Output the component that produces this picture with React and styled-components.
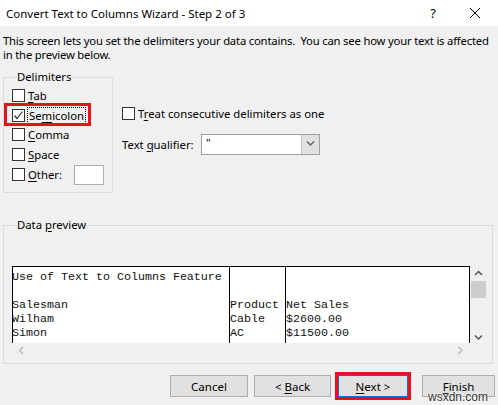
import React from 'react'
import styled, { createGlobalStyle } from 'styled-components'

const GlobalStyle = createGlobalStyle`
  html, body {
    margin: 0;
    padding: 0;
    background: #f0f0f0;
  }
  body {
    font-family: 'Noto Sans', 'Liberation Sans', sans-serif;
    font-size: 11.3px;
    color: #000;
  }
`

const Window = styled.div`
  position: relative;
  width: 498px;
  height: 405px;
  overflow: hidden;
  background: #f0f0f0;
  display: flex;
  flex-direction: column;
`

const TitleBar = styled.div`
  height: 26px;
  flex: none;
  background: #fff;
  display: flex;
  align-items: center;
  padding-left: 6px;
  font-size: 11.5px;
`

const Title = styled.span`
  flex: 1;
`

const TitleButton = styled.span`
  width: 46px;
  height: 26px;
  display: flex;
  align-items: center;
  justify-content: center;
  font-size: 13px;
`

const HelpButton = styled(TitleButton)`
  padding-left: 8px;
  box-sizing: border-box;
`

const Body = styled.div`
  padding: 8px 3px 0 3px;
  display: flex;
  flex-direction: column;
`

const Description = styled.p`
  margin: 0;
  line-height: 14px;
  white-space: nowrap;
  letter-spacing: -0.2px;
`

const TopRow = styled.div`
  display: flex;
  margin-top: 7px;
`

const Group = styled.fieldset`
  margin: 0;
  border: 1px solid #dcdcdc;
  padding: ${(p) => p.$pad || '0'};
  width: ${(p) => p.$width};
  height: ${(p) => p.$height};
  box-sizing: border-box;
`

const Legend = styled.legend`
  padding: 0;
  margin-left: 5px;
  line-height: 16px;
`

const U = styled.span`
  text-decoration: underline;
  text-underline-offset: 2px;
`

const CheckRow = styled.label`
  position: relative;
  display: flex;
  align-items: center;
  gap: 3px;
  height: ${(p) => p.$h || '19.5px'};
`

const Box = styled.span`
  width: 13px;
  height: 13px;
  box-sizing: border-box;
  border: 1px solid #333;
  background: #fff;
  flex: none;
  display: flex;
  align-items: center;
  justify-content: center;
`

const Focused = styled.span`
  outline: 1px dotted #000;
  outline-offset: 0;
  padding: 0 1px;
`

const Highlight = styled.span`
  position: absolute;
  left: -8px;
  top: -3px;
  width: 87px;
  height: 23px;
  box-sizing: border-box;
  border: 3px solid #e3131b;
  pointer-events: none;
`

const OtherInput = styled.span`
  margin-left: 9px;
  width: 30px;
  height: 20px;
  box-sizing: border-box;
  border: 1px solid #adadad;
  background: #fff;
`

const Options = styled.div`
  margin-left: 9px;
  padding-top: 35px;
  display: flex;
  flex-direction: column;
`

const QualifierRow = styled.div`
  display: flex;
  align-items: center;
  margin-top: 10px;
`

const QualifierLabel = styled.span`
  width: 79px;
`

const Combo = styled.div`
  width: 119px;
  height: 21px;
  box-sizing: border-box;
  border: 1px solid #a0a0a0;
  background: #fff;
  display: flex;
`

const ComboValue = styled.span`
  flex: 1;
  padding-left: 4px;
  line-height: 16px;
`

const ComboButton = styled.span`
  width: 17px;
  background: #e1e1e1;
  border-left: 1px solid #c8c8c8;
  display: flex;
  align-items: center;
  justify-content: center;
`

const PreviewGroup = styled(Group)`
  margin-top: 24px;
`

const Preview = styled.div`
  margin-top: 33px;
  display: grid;
  grid-template-columns: 458px 17px;
  grid-template-rows: 77px 15px;
`

const Sheet = styled.div`
  background: #fff;
  border: 1px solid #000;
  border-bottom: none;
  box-sizing: border-box;
  display: grid;
  grid-template-columns: 216px 56px 1fr;
  overflow: hidden;
  font-family: 'Liberation Mono', 'Courier New', monospace;
  font-size: 11.67px;
  color: #111;
`

const Column = styled.div`
  padding-top: 3px;
  border-left: ${(p) => (p.$first ? 'none' : '1px solid #000')};
  margin-left: ${(p) => (p.$first ? '-1px' : '0')};
  white-space: pre;
`

const Cell = styled.div`
  height: 14px;
  line-height: 14px;
`

const VScroll = styled.div`
  background: #f0f0f0;
  display: flex;
  flex-direction: column;
  align-items: center;
  padding-top: 4px;
`

const Thumb = styled.div`
  width: 15px;
  height: 17px;
  background: #cdcdcd;
  margin-top: 2px;
`

const Spacer = styled.span`
  flex: 1;
`

const HScroll = styled.div`
  grid-column: 1 / 3;
  display: flex;
  justify-content: space-between;
  align-items: center;
  padding: 0 21px 0 6px;
`

const Buttons = styled.div`
  display: flex;
  justify-content: flex-end;
  gap: 6px;
  margin-top: 11px;
`

const ButtonWrap = styled.span`
  position: relative;
  display: flex;
  margin-left: ${(p) => p.$ml || '0'};
`

const Button = styled.button`
  width: ${(p) => p.$w || '77px'};
  height: 22px;
  box-sizing: border-box;
  background: #e1e1e1;
  border: 1px solid ${(p) => (p.$default ? '#0078d7' : '#adadad')};
  font-family: inherit;
  font-size: 11.5px;
  color: #000;
  padding: 0;
`

const RedFrame = styled.span`
  position: absolute;
  left: -3px;
  top: -3px;
  right: -3px;
  bottom: -3px;
  border: 3px solid #e3131b;
  pointer-events: none;
`

const Watermark = styled.span`
  position: absolute;
  right: 10px;
  bottom: 1px;
  font-family: 'Liberation Sans', sans-serif;
  font-size: 12px;
  color: #333;
  text-shadow: 0 0 2px #fff, 0 0 2px #fff;
`

const Chevron = ({ dir = 'down', color = '#555' }) => {
  const d = {
    down: 'M1 1.5 L4.5 5 L8 1.5',
    up: 'M1 5 L4.5 1.5 L8 5',
    left: 'M5 1 L1.5 4.5 L5 8',
    right: 'M1.5 1 L5 4.5 L1.5 8',
  }[dir]
  return (
    <svg width="9" height="9" viewBox="0 0 9 9">
      <path d={d} fill="none" stroke={color} strokeWidth="1.5" />
    </svg>
  )
}

const Check = () => (
  <svg width="11" height="11" viewBox="0 0 11 11">
    <path d="M1.5 5.5 L4 8.5 L9.5 1.5" fill="none" stroke="#333" strokeWidth="1.2" />
  </svg>
)

const Close = () => (
  <svg width="12" height="12" viewBox="0 0 12 12">
    <path d="M1 1 L11 11 M11 1 L1 11" stroke="#000" strokeWidth="1" />
  </svg>
)

const rows = [
  ['Use of Text to Columns Feature', '', ''],
  ['', '', ''],
  ['Salesman', 'Product', 'Net Sales'],
  ['Wilham', 'Cable', '$2600.00'],
  ['Simon', 'AC', '$11500.00'],
]

export default function App() {
  return (
    <Window>
      <GlobalStyle />
      <TitleBar>
        <Title>Convert Text to Columns Wizard - Step 2 of 3</Title>
        <HelpButton>?</HelpButton>
        <TitleButton>
          <Close />
        </TitleButton>
      </TitleBar>
      <Body>
        <Description>
          This screen lets you set the delimiters your data contains.&nbsp; You can see how your text is affected
          <br />
          in the preview below.
        </Description>
        <TopRow>
          <Group $width="110px" $height="124px" $pad="1px 4px 0 8px">
            <Legend>Delimiters</Legend>
            <CheckRow>
              <Box />
              <span><U>T</U>ab</span>
            </CheckRow>
            <CheckRow>
              <Box>
                <Check />
              </Box>
              <Focused>Se<U>m</U>icolon</Focused>
              <Highlight />
            </CheckRow>
            <CheckRow>
              <Box />
              <span><U>C</U>omma</span>
            </CheckRow>
            <CheckRow>
              <Box />
              <span><U>S</U>pace</span>
            </CheckRow>
            <CheckRow $h="21px">
              <Box />
              <span><U>O</U>ther:</span>
              <OtherInput />
            </CheckRow>
          </Group>
          <Options>
            <CheckRow>
              <Box />
              <span>T<U>r</U>eat consecutive delimiters as one</span>
            </CheckRow>
            <QualifierRow>
              <QualifierLabel>Text <U>q</U>ualifier:</QualifierLabel>
              <Combo>
                <ComboValue>"</ComboValue>
                <ComboButton>
                  <Chevron dir="down" color="#666" />
                </ComboButton>
              </Combo>
            </QualifierRow>
          </Options>
        </TopRow>
        <PreviewGroup $width="490px" $height="147px" $pad="0 0 0 8px">
          <Legend>Data <U>p</U>review</Legend>
          <Preview>
            <Sheet>
              {[0, 1, 2].map((c) => (
                <Column key={c} $first={c === 0}>
                  {rows.map((r, i) => (
                    <Cell key={i}>{r[c]}</Cell>
                  ))}
                </Column>
              ))}
            </Sheet>
            <VScroll>
              <Chevron dir="up" />
              <Thumb />
              <Spacer />
              <Chevron dir="down" />
            </VScroll>
            <HScroll>
              <Chevron dir="left" color="#bbb" />
              <Chevron dir="right" color="#bbb" />
            </HScroll>
          </Preview>
        </PreviewGroup>
        <Buttons>
          <ButtonWrap>
            <Button $w="78px">Cancel</Button>
          </ButtonWrap>
          <ButtonWrap>
            <Button>&lt; <U>B</U>ack</Button>
          </ButtonWrap>
          <ButtonWrap $ml="1px">
            <Button $default $w="70px"><U>N</U>ext &gt;</Button>
            <RedFrame />
          </ButtonWrap>
          <ButtonWrap $ml="8px">
            <Button $w="73px"><U>F</U>inish</Button>
          </ButtonWrap>
        </Buttons>
      </Body>
      <Watermark>wsxdn.com</Watermark>
    </Window>
  )
}
